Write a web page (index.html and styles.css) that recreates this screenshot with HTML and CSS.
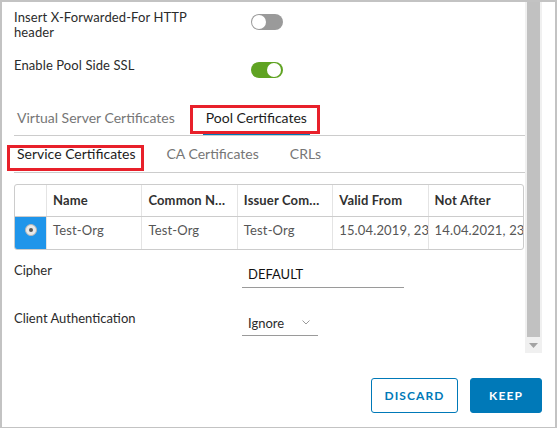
FILE: index.html
```html
<!DOCTYPE html>
<html lang="en">
<head>
<meta charset="utf-8">
<title>Pool Certificates</title>
<link rel="stylesheet" href="styles.css">
</head>
<body>
<div class="frame">
  <div class="main">
    <div class="content">
      <div class="setting first">
        <div class="setting-label">Insert X-Forwarded-For HTTP header</div>
        <div class="toggle off"><span class="knob"></span></div>
      </div>
      <div class="setting second">
        <div class="setting-label">Enable Pool Side SSL</div>
        <div class="toggle on"><span class="knob"></span></div>
      </div>

      <div class="tabs tabs-main">
        <div class="tab">Virtual Server Certificates</div>
        <div class="tab active">Pool Certificates<span class="mark mark-pool"></span></div>
      </div>
      <div class="tabs tabs-sub">
        <div class="tab current">Service Certificates<span class="mark mark-service"></span></div>
        <div class="tab">CA Certificates</div>
        <div class="tab">CRLs</div>
      </div>

      <div class="grid-table">
        <div class="row head">
          <div class="cell sel"></div>
          <div class="cell">Name</div>
          <div class="cell">Common Name</div>
          <div class="cell">Issuer Common Name</div>
          <div class="cell">Valid From</div>
          <div class="cell">Not After</div>
        </div>
        <div class="row body">
          <div class="cell sel selected"><span class="radio"><span class="dot"></span></span></div>
          <div class="cell">Test-Org</div>
          <div class="cell">Test-Org</div>
          <div class="cell">Test-Org</div>
          <div class="cell">15.04.2019, 23:59</div>
          <div class="cell">14.04.2021, 23:59</div>
        </div>
      </div>

      <div class="form-row cipher-row">
        <div class="form-label">Cipher</div>
        <div class="input">DEFAULT</div>
      </div>
      <div class="form-row auth-row">
        <div class="form-label">Client Authentication</div>
        <div class="select">
          <span>Ignore</span>
          <svg class="chev" width="8" height="5" viewBox="0 0 8 5"><polyline points="0.5,0.5 4,4 7.5,0.5" fill="none" stroke="#9a9a9a" stroke-width="1"/></svg>
        </div>
      </div>
    </div>
    <div class="scrollbar">
      <div class="thumb"></div>
      <div class="arrow"><svg width="9" height="5" viewBox="0 0 9 5"><polygon points="0,0 9,0 4.5,5" fill="#a3a3a3"/></svg></div>
    </div>
    <div class="gutter"></div>
  </div>
  <div class="footer">
    <button class="btn outline">DISCARD</button>
    <button class="btn primary">KEEP</button>
  </div>
</div>
</body>
</html>
```
FILE: styles.css
```css
html, body {
  margin: 0;
  padding: 0;
  background: #ffffff;
}
body {
  font-family: "Lato", "Open Sans", "Liberation Sans", sans-serif;
  font-size: 13px;
  color: #333333;
}
.frame {
  width: 557px;
  height: 428px;
  box-sizing: border-box;
  border-style: solid;
  border-color: #c3c3c3;
  border-width: 2px 2px 1px 2px;
  display: flex;
  flex-direction: column;
}
.main {
  display: flex;
  height: 351px;
}
.content {
  width: 523px;
  box-sizing: border-box;
  padding: 8px 0 0 12px;
  overflow: hidden;
}
.scrollbar {
  width: 17px;
  background: #f0f0f0;
  display: flex;
  flex-direction: column;
  align-items: center;
}
.thumb {
  width: 13px;
  height: 335px;
  background: #c1c1c1;
}
.arrow {
  height: 16px;
  width: 17px;
  display: flex;
  align-items: center;
  justify-content: center;
}
.gutter {
  width: 13px;
}
.setting {
  display: flex;
  align-items: flex-start;
  line-height: 15px;
}
.setting.second {
  margin-top: 18px;
}
.setting-label {
  width: 190px;
  margin-right: 47px;
  color: #2b2b2b;
  letter-spacing: 0.1px;
}
.toggle {
  position: relative;
  width: 32px;
  height: 16px;
  border-radius: 8px;
  margin-top: 3.5px;
  box-sizing: border-box;
}
.toggle.off { background: #9a9a9a; }
.toggle.on { background: #5fa322; }
.knob {
  position: absolute;
  top: 1px;
  width: 14px;
  height: 14px;
  border-radius: 50%;
  background: #ffffff;
}
.toggle.off .knob { left: 1px; }
.toggle.on .knob { right: 2px; }

.tabs {
  display: flex;
  width: 511px;
  border-bottom: 1px solid #cccccc;
  line-height: 15px;
  font-size: 14px;
}
.tabs-main {
  margin-top: 21px;
}
.tab {
  position: relative;
  padding: 0 3px;
  margin-right: 25px;
  color: #767676;
}
.tabs-main .tab { padding-top: 11px; padding-bottom: 10px; }
.tabs-sub .tab { padding-top: 10px; padding-bottom: 11px; }
.tab.active {
  color: #1c1c1c;
  box-shadow: inset 0 -2px 0 #0079b8;
}
.tab.current {
  color: #1c1c1c;
}
.mark {
  position: absolute;
  border: 3px solid #e8202a;
  box-sizing: border-box;
}
.mark-pool {
  top: 6px;
  bottom: 1px;
  left: -13px;
  right: -10px;
}
.mark-service {
  top: 9px;
  bottom: 1px;
  left: -7px;
  right: -5px;
}

.grid-table {
  margin-top: 11px;
  width: 510px;
  box-sizing: border-box;
  border: 1px solid #cccccc;
  border-radius: 3px;
  overflow: hidden;
}
.row {
  display: grid;
  grid-template-columns: 31px repeat(5, 1fr);
}
.row.head {
  height: 31px;
  border-bottom: 1px solid #cccccc;
  font-weight: 700;
  color: #313131;
  letter-spacing: 0.15px;
}
.row.body {
  height: 32px;
  color: #565656;
  letter-spacing: 0.15px;
}
.cell {
  border-left: 1px solid #e4e4e4;
  padding: 6px 6px 0;
  line-height: 15px;
  white-space: nowrap;
  overflow: hidden;
  min-width: 0;
}
.row.head .cell {
  padding-top: 0;
  line-height: 31px;
  text-overflow: ellipsis;
}
.cell.sel {
  border-left: none;
  padding: 0;
}
.cell.selected {
  background: #1f95ea;
  display: flex;
  align-items: flex-start;
  justify-content: center;
}
.radio {
  margin-top: 7px;
  width: 10px;
  height: 10px;
  border-radius: 50%;
  background: #e9e9e9;
  border: 1px solid #b5b5b5;
  display: flex;
  align-items: center;
  justify-content: center;
}
.dot {
  width: 4px;
  height: 4px;
  border-radius: 50%;
  background: #555555;
}

.form-row {
  display: grid;
  grid-template-columns: 228px auto;
  align-items: start;
  line-height: 15px;
}
.cipher-row { margin-top: 12px; }
.auth-row { margin-top: 22px; }
.form-label {
  padding-top: 1.5px;
  color: #2b2b2b;
}
.input {
  width: 162px;
  box-sizing: border-box;
  padding: 5px 6px 5px;
  border-bottom: 1px solid #9a9a9a;
  color: #111111;
}
.select {
  width: 76px;
  box-sizing: border-box;
  padding: 6px 6px 4px;
  border-bottom: 1px solid #9a9a9a;
  display: flex;
  align-items: center;
  justify-content: space-between;
  color: #2b2b2b;
}
.chev {
  margin-right: 2px;
  margin-top: -2px;
}

.footer {
  flex: 1;
  display: flex;
  justify-content: flex-end;
  align-items: flex-start;
  gap: 12px;
  padding: 25px 13px 0 0;
}
.btn {
  height: 35px;
  border-radius: 3px;
  font-family: "Lato", "Open Sans", "Liberation Sans", sans-serif;
  font-size: 12px;
  font-weight: 700;
  letter-spacing: 1.1px;
  padding: 0;
  cursor: pointer;
}
.btn.outline {
  width: 87px;
  background: #ffffff;
  color: #0079b8;
  border: 1px solid #0079b8;
}
.btn.primary {
  width: 72px;
  background: #0079b8;
  color: #ffffff;
  border: 1px solid #0079b8;
}
```
